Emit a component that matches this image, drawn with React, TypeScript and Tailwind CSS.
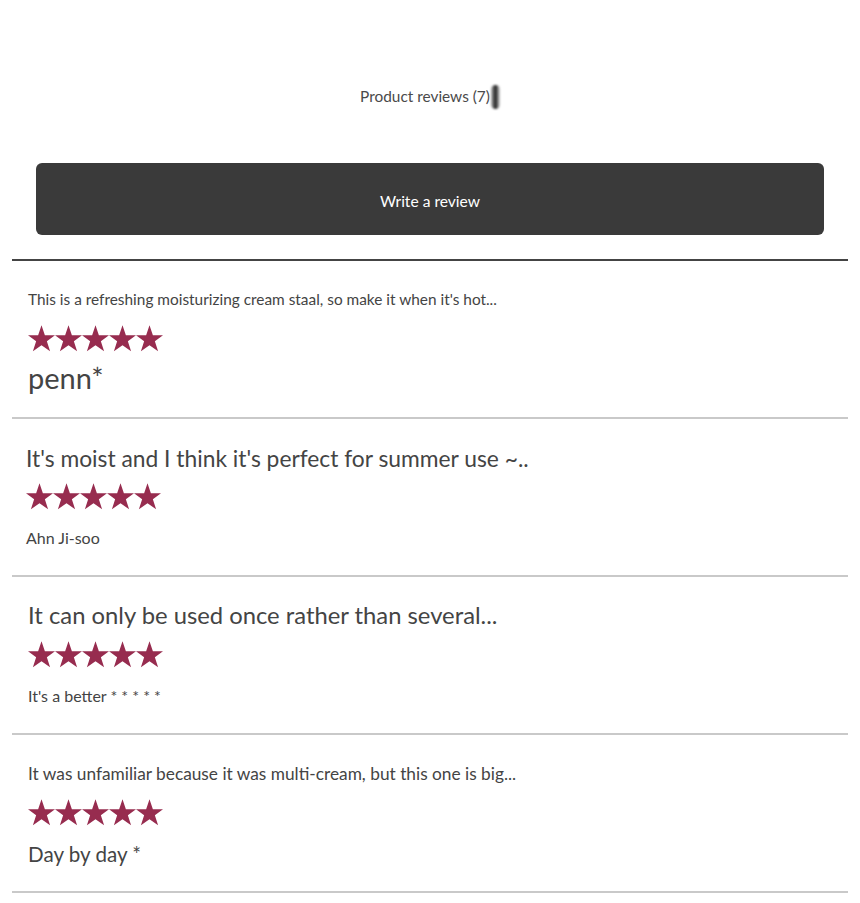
import React from 'react';

type Review = {
  id: number;
  title: string;
  titleClass: string;
  author: string;
  authorClass: string;
  indent: string;
};

const reviews: Review[] = [
  {
    id: 1,
    title: "This is a refreshing moisturizing cream staal, so make it when it's hot...",
    titleClass: 'text-[15.4px]',
    author: 'penn*',
    authorClass: 'text-[29px] -translate-y-[2px]',
    indent: 'pl-4',
  },
  {
    id: 2,
    title: "It's moist and I think it's perfect for summer use ~..",
    titleClass: 'text-[22.8px]',
    author: 'Ahn Ji-soo',
    authorClass: 'text-[16px]',
    indent: 'pl-[14px]',
  },
  {
    id: 3,
    title: 'It can only be used once rather than several...',
    titleClass: 'text-[23.8px]',
    author: "It's a better * * * * *",
    authorClass: 'text-[16px]',
    indent: 'pl-4',
  },
  {
    id: 4,
    title: 'It was unfamiliar because it was multi-cream, but this one is big...',
    titleClass: 'text-[17.3px]',
    author: 'Day by day *',
    authorClass: 'text-[20.6px]',
    indent: 'pl-4',
  },
];

function Stars() {
  return (
    <div className="flex items-center -translate-y-[2px]">
      {[0, 1, 2, 3, 4].map(i => (
        <svg key={i} width="27" height="27" viewBox="1 1 22 22" className="text-[#972c4f]">
          <path
            fill="currentColor"
            d="M12 1.2l2.75 8.05h8.5l-6.88 5 2.63 8.15L12 17.4l-7 5 2.63-8.15-6.88-5h8.5z"
          />
        </svg>
      ))}
    </div>
  );
}

export default function App() {
  return (
    <div className="min-h-screen bg-white text-[#444] font-['Lato','Open_Sans',sans-serif]">
      <div className="pt-[87px] flex justify-center">
        <div className="h-5 flex items-center text-[15.4px] text-[#4a4a4a]">
          Product reviews (7)
          <span className="ml-[1px] h-[24px] w-[9px] rounded-full bg-gradient-to-r from-[#bbb] via-[#222] to-[#ddd] blur-[1px]" />
        </div>
      </div>

      <button className="mt-[56px] mx-[36px] w-[788px] h-[72px] pt-[5px] rounded-[6px] bg-[#3a3a3a] text-white text-[15.6px] flex items-center justify-center">
        Write a review
      </button>

      <div className="mt-[24px] mx-3 border-t-2 border-[#444]">
        {reviews.map(r => (
          <div key={r.id} className={`border-b-2 border-[#c9c9c9] pt-[19px] pb-[17px] ${r.indent}`}>
            <div className={`h-10 flex items-center ${r.titleClass}`}>{r.title}</div>
            <div className="h-10 flex items-center">
              <Stars />
            </div>
            <div className={`h-10 flex items-center ${r.authorClass}`}>{r.author}</div>
          </div>
        ))}
      </div>
    </div>
  );
}
